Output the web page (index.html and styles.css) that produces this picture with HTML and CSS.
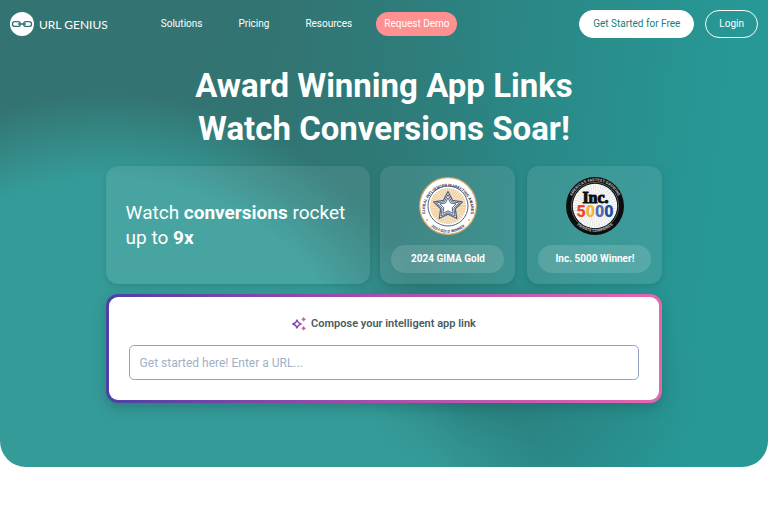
FILE: index.html
```html
<!DOCTYPE html>
<html lang="en">
<head>
<meta charset="utf-8">
<meta name="viewport" content="width=device-width, initial-scale=1">
<title>URL Genius</title>
<link rel="stylesheet" href="styles.css">
</head>
<body>
<div class="hero">
  <header class="topbar">
    <a class="brand" href="#">
      <svg class="brand-mark" viewBox="0 0 24 24" aria-hidden="true">
        <circle cx="12" cy="12" r="12" fill="#fff"/>
        <g fill="none" stroke="#337673" stroke-width="1.4">
          <rect x="2.5" y="9.6" width="7.8" height="4.8" rx="2.2"/>
          <rect x="13.7" y="9.6" width="7.8" height="4.8" rx="2.2"/>
          <path d="M8.5 12h7" stroke-linecap="round"/>
        </g>
      </svg>
      <span>URL GENIUS</span>
    </a>
    <nav class="menu">
      <a href="#">Solutions</a>
      <a href="#">Pricing</a>
      <a href="#">Resources</a>
      <a class="demo" href="#">Request Demo</a>
    </nav>
    <div class="account">
      <a class="pill pill-solid" href="#">Get Started for Free</a>
      <a class="pill pill-outline" href="#">Login</a>
    </div>
  </header>
  <main class="content">
    <h1>Award Winning App Links<br>Watch Conversions Soar!</h1>
    <div class="cards">
      <section class="card claim">
        <p>Watch <b>conversions</b> rocket<br>up to <b>9x</b></p>
      </section>
      <div class="awards">
        <section class="card award">
          <svg class="badge" viewBox="0 0 58 58" aria-hidden="true">
            <defs>
              <path id="gima-top" d="M6.9 39A23 23 0 1 1 51.1 39"/>
              <path id="gima-bottom" d="M9 46.5A26.3 26.3 0 0 0 49 46.5"/>
            </defs>
            <circle cx="29" cy="29" r="28.3" fill="#fff" stroke="#d9a868" stroke-width="1.2"/>
            <circle cx="29" cy="29" r="20" fill="#fff" stroke="#56647f" stroke-width="1"/>
            <circle cx="29" cy="29" r="9" fill="none" stroke="#f0cf9f" stroke-width="18" stroke-dasharray=".9 .28"/>
            <g stroke="#56647f" stroke-linejoin="round" fill="#fff">
              <path d="M29 14.5L33.5 23.3L43.3 24.8L36.3 31.8L37.8 41.5L29 37.1L20.2 41.5L21.7 31.8L14.7 24.8L24.5 23.3Z" stroke-width="1.3"/>
              <path d="M29 17.7L32.6 24.7L40.4 25.9L34.8 31.4L36 39.1L29 35.6L22 39.1L23.2 31.4L17.6 25.9L25.4 24.7Z" stroke-width="1"/>
              <path d="M29 20.9L31.6 26L37.2 26.9L33.2 30.9L34.1 36.4L29 33.9L23.9 36.4L24.8 30.9L20.8 26.9L26.4 26Z" stroke-width="1"/>
            </g>
            <text class="ring-text ring-navy"><textPath href="#gima-top" startOffset="50%">GLOBAL INFLUENCER MARKETING AWARDS</textPath></text>
            <text class="ring-text ring-navy"><textPath href="#gima-bottom" startOffset="50%">2024 GOLD WINNER</textPath></text>
            <circle cx="8" cy="43" r=".9" fill="#d9a868"/>
            <circle cx="50" cy="43" r=".9" fill="#d9a868"/>
          </svg>
          <p class="tag">2024 GIMA Gold</p>
        </section>
        <section class="card award">
          <svg class="badge" viewBox="0 0 58 58" aria-hidden="true">
            <defs>
              <path id="inc-top" d="M5.2 22A24.8 24.8 0 0 1 52.8 22"/>
              <path id="inc-bottom" d="M7 43.5A27 27 0 0 0 51 43.5"/>
            </defs>
            <circle cx="29" cy="29" r="29" fill="#0b0d0e"/>
            <circle cx="29" cy="29" r="23.6" fill="#0b0d0e" stroke="#8f9696" stroke-width=".6"/>
            <circle cx="29" cy="29" r="22.2" fill="#fafafa"/>
            <circle cx="29" cy="29" r="14" fill="none" stroke="#c9cccd" stroke-width="15" stroke-dasharray=".35 1.48"/>
            <text class="inc-name" x="29.5" y="26">Inc.</text>
            <text class="inc-number" x="29" y="40"><tspan class="n1">5</tspan><tspan class="n2">0</tspan><tspan class="n3">0</tspan><tspan class="n4">0</tspan></text>
            <text class="ring-text ring-light"><textPath href="#inc-top" startOffset="50%">AMERICA’S FASTEST-GROWING</textPath></text>
            <text class="ring-text ring-light"><textPath href="#inc-bottom" startOffset="50%">PRIVATE COMPANIES</textPath></text>
          </svg>
          <p class="tag">Inc. 5000 Winner!</p>
        </section>
      </div>
    </div>
    <form class="composer">
      <label class="composer-label" for="url">
        <svg class="sparkles" viewBox="0 0 14 14" aria-hidden="true">
          <defs>
            <linearGradient id="spark" x1="0" x2="1">
              <stop stop-color="#5b3fa8"/><stop offset="1" stop-color="#b04fb0"/>
            </linearGradient>
          </defs>
          <path d="M5 2.8Q5.8 6.2 9.2 7Q5.8 7.8 5 11.2Q4.2 7.8.8 7Q4.2 6.2 5 2.8Z" fill="none" stroke="url(#spark)" stroke-width="1.3" stroke-linejoin="round"/>
          <path d="M11.6.4Q11.9 2 13.5 2.3Q11.9 2.6 11.6 4.2Q11.3 2.6 9.7 2.3Q11.3 2 11.6.4ZM11.6 9.4Q11.9 11 13.5 11.3Q11.9 11.6 11.6 13.2Q11.3 11.6 9.7 11.3Q11.3 11 11.6 9.4Z" fill="#cf51ac" stroke="#cf51ac" stroke-width=".7"/>
        </svg>
        Compose your intelligent app link
      </label>
      <input id="url" type="url" placeholder="Get started here! Enter a URL...">
    </form>
  </main>
</div>
</body>
</html>
```
FILE: styles.css
```css
* { box-sizing: border-box; }

body {
  margin: 0;
  background: #fff;
  color: #fff;
  font-family: Roboto, "Liberation Sans", sans-serif;
  font-size: 10px;
}

a { color: inherit; text-decoration: none; }
p, h1 { margin: 0; }

.hero {
  padding-bottom: 64px;
  border-radius: 0 0 26px 26px;
  background:
    radial-gradient(ellipse 22% 22% at 50% 104%, #359b98 30%, rgba(53, 155, 152, 0)),
    radial-gradient(ellipse 46% 76% at 14% 96%, #359b98 76%, rgba(53, 155, 152, 0)),
    radial-gradient(ellipse 26% 24% at 66% 84%, rgba(42, 122, 120, .6), rgba(42, 122, 120, 0)),
    radial-gradient(ellipse 22% 60% at 46% 42%, rgba(46, 116, 114, .5), rgba(46, 116, 114, 0)),
    linear-gradient(97deg, #337472 34%, #2b8583 60%, #279896 90%);
}

.topbar {
  display: flex;
  align-items: center;
  padding: 10px 10px 0;
}

.brand {
  display: flex;
  align-items: center;
  gap: 5px;
  font-family: Lato, sans-serif;
  font-size: 12px;
}
.brand-mark { width: 24px; height: 24px; }

.menu {
  display: flex;
  align-items: center;
  gap: 36px;
  margin-left: 53px;
  line-height: 24px;
}
.demo {
  margin-left: -12px;
  padding: 0 8px;
  border-radius: 12px;
  background: #ff9091;
}

.account {
  display: flex;
  gap: 11px;
  margin-left: auto;
}
.pill {
  padding: 0 13px;
  border: 1px solid #fff;
  border-radius: 14px;
  line-height: 26px;
}
.pill-solid { background: #fff; color: #16807d; }

.content {
  width: 72.5%;
  max-width: 960px;
  margin: 0 auto;
  padding-top: 26px;
}

h1 {
  font-size: 33px;
  font-weight: 700;
  line-height: 43px;
  text-align: center;
  white-space: nowrap;
}

.cards {
  display: grid;
  grid-template-columns: 265fr 282fr;
  gap: 10px;
  margin-top: 16px;
}
.card {
  border-radius: 12px;
  background: rgba(255, 255, 255, .09);
  box-shadow: 0 2px 5px rgba(20, 80, 80, .25);
}
.claim {
  display: flex;
  align-items: center;
  padding: 0 20px;
  font-size: 19px;
  line-height: 25px;
}
.awards {
  display: grid;
  grid-template-columns: 1fr 1fr;
  gap: 12px;
}
.award {
  display: flex;
  flex-direction: column;
  align-items: center;
  gap: 10px;
  padding: 11px;
}
.badge { width: 58px; height: 58px; }
.tag {
  align-self: stretch;
  border-radius: 14px;
  background: rgba(255, 255, 255, .14);
  font-weight: 700;
  line-height: 28px;
  text-align: center;
}

.ring-text {
  font-size: 4px;
  font-weight: 700;
  text-anchor: middle;
}
.ring-navy { fill: #3c4a68; }
.ring-light { fill: #b5baba; }
.inc-name {
  fill: #0b0d0e;
  stroke: #0b0d0e;
  stroke-width: 1px;
  font: 700 16px "Liberation Serif", serif;
  text-anchor: middle;
}
.inc-number {
  font: 900 16px Roboto, sans-serif;
  text-anchor: middle;
}
.n1 { fill: #e9482f; }
.n2 { fill: #f5b52e; }
.n3 { fill: #5268b2; }
.n4 { fill: #234b9c; }

.composer {
  display: flex;
  flex-direction: column;
  align-items: center;
  gap: 13px;
  margin-top: 10px;
  padding: 19px 20px 20px;
  border: 3px solid transparent;
  border-radius: 12px;
  background:
    linear-gradient(#fff, #fff) padding-box,
    linear-gradient(90deg, #4d3fa5, #a94fae 50%, #e566b0) border-box;
  box-shadow: 0 5px 12px rgba(20, 80, 80, .35);
}
.composer-label {
  display: flex;
  align-items: center;
  gap: 5px;
  color: #4b5c5c;
  font-size: 11px;
  font-weight: 600;
  line-height: 16px;
}
.sparkles { width: 14px; height: 14px; }
.composer input {
  width: 100%;
  height: 35px;
  padding: 0 10px;
  border: 1px solid #94a3bf;
  border-radius: 5px;
  background: #fff;
  color: #4b5c5c;
  font: 12px Roboto, sans-serif;
}
.composer input::placeholder { color: #a0b0c6; opacity: 1; }
```
